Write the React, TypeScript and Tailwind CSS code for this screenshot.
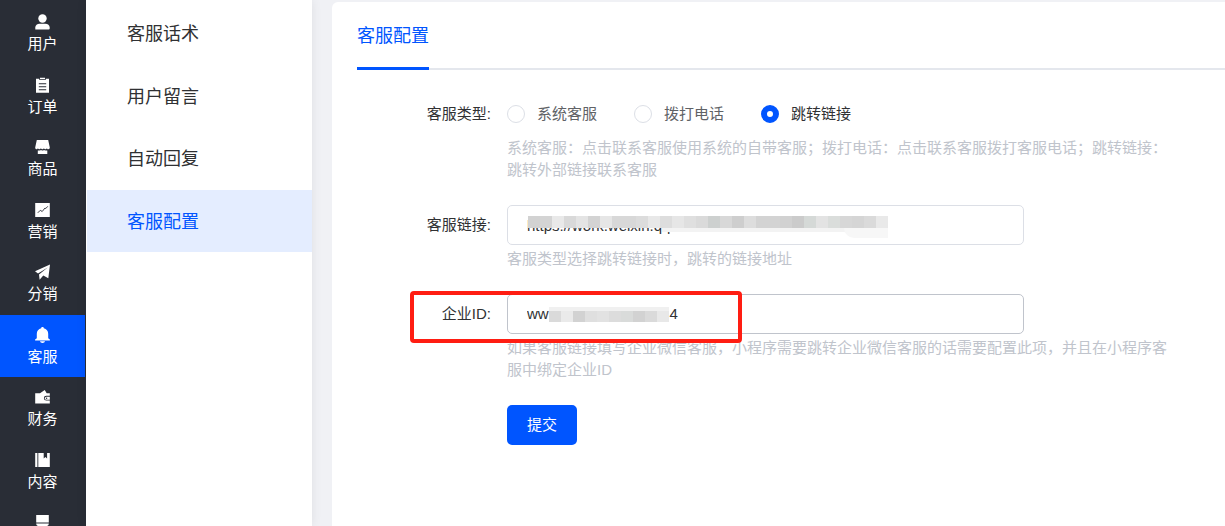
import { useState, type ReactNode } from 'react';
import clsx from 'clsx';

const icons: Record<string, ReactNode> = {
  user: (
    <>
      <circle cx="7.500" cy="4.500" r="4.200" />
      <path d="M.3 15.600v-2C.3 11 2.200 9.700 4.600 9.700h5.800c2.400 0 4.300 1.300 4.300 3.900v1a1 1 0 0 1-1 1z" />
    </>
  ),
  order: (
    <path
      fillRule="evenodd"
      d="M1 1.800h3.300V3h6.400V1.800H14V15.800H1zM5 .8h5v1.400H5zM3.800 6.200v1h7.400v-1zM3.800 9.200v1h7.400v-1zM3.800 12.200v1h7.400v-1z"
    />
  ),
  goods: (
    <path d="M1.800 1h11.400l1.600 7.500c0 1-.6 1.700-1.500 1.700s-1.200-.5-1.400-1c-.3.600-.8 1-1.500 1s-1.200-.4-1.500-1c-.3.600-.8 1-1.500 1s-1.200-.4-1.500-1c-.3.600-.8 1-1.500 1s-1.200-.4-1.500-1c-.2.500-.6 1-1.400 1S.2 9.500.2 8.500zM2.800 11.400h1.900c.6 0 1.100-.2 1.500-.5.800.7 1.900.7 2.700 0 .4.300.9.500 1.500.500h1.900V15H2.800z" />
  ),
  marketing: (
    <>
      <path d="M.2 1h14.600v14H.2z" />
      <path d="M2.800 10.800 5.300 8.300l1.900 1.200L10 6l.8.500 2-2.200" fill="none" stroke="#292d36" strokeWidth=".9" />
    </>
  ),
  share: <path d="M15 .5 13.300 14.300 8.300 11.500 4.600 15.700 4 10.600 12.700 3.500 3 9.500 0 7.300z" />,
  bell: (
    <path d="M7.500 0c.8 0 1.300.5 1.300 1.300 2.700.6 4.400 2.700 4.400 5.400v4.500l1.700 1.400v.9H.1v-.9l1.700-1.400V6.700c0-2.700 1.700-4.800 4.400-5.400C6.200.5 6.700 0 7.500 0zM5 14.300h5C9.700 15.400 8.800 16 7.500 16s-2.200-.6-2.500-1.700z" />
  ),
  wallet: (
    <>
      <path d="M5 4.200 9.700 1l2 3.200H14.800v2.600h-3.500a2.400 2.400 0 0 0 0 4.800h3.500v2.900H.2V4.200z" />
      <path d="M14.800 7.700v3h-3.400a1.500 1.500 0 0 1 0-3z" />
      <circle cx="11.600" cy="9.200" r=".7" fill="#292d36" />
    </>
  ),
  content: <path d="M.2 1h2.200v14H.2zM3.300 1h5.400v5.400l1.700-1.500 1.700 1.500V1h2.700v14H3.300z" />,
  device: <path d="M1.200 1h12.600v7.600H1.200zM1.200 9.600h12.600c0 1.500-.8 2.400-2 2.400H9.500l1 3h-6l1-3H3.200c-1.200 0-2-.9-2-2.400z" />,
};

const modules = [
  { icon: 'user', name: '用户' },
  { icon: 'order', name: '订单' },
  { icon: 'goods', name: '商品' },
  { icon: 'marketing', name: '营销' },
  { icon: 'share', name: '分销' },
  { icon: 'bell', name: '客服' },
  { icon: 'wallet', name: '财务' },
  { icon: 'content', name: '内容' },
  { icon: 'device', name: '' },
];

const subMenu = ['客服话术', '用户留言', '自动回复', '客服配置'];
const serviceTypes = ['系统客服', '拨打电话', '跳转链接'];

// blocks that hide private values
const linkMask = [
  'bg-[#d2d2d2]', 'bg-[#d4d4d4]', 'bg-[#e9e9e9]', 'bg-[#d9d9d9]', 'bg-[#e4e4e4]', 'bg-[#d3d3d3]',
  'bg-[#e6e6e6]', 'bg-[#d8d8d8]', 'bg-[#d8d8d8]', 'bg-[#dcdcdc]', 'bg-[#e8e8e8]', 'bg-[#dddddd]',
  'bg-[#e6e6e6]', 'bg-[#dfdfdf]', 'bg-[#dadada]', 'bg-[#cdd0cf]', 'bg-[#d8d8d8]', 'bg-[#cecece]',
  'bg-[#dddddd]', 'bg-[#d3d3d3]', 'bg-[#d3d3d3]', 'bg-[#d1d1d1]', 'bg-[#cbcbcb]', 'bg-[#d5d9d7]',
  'bg-[#e3e3e3]', 'bg-[#dadddb]', 'bg-[#d7d7d7]', 'bg-[#d5d5d5]', 'bg-[#dadada]', 'bg-[#e9e9e9]',
];
const idMask = [
  'bg-[#dadada]', 'bg-[#eaeaea]', 'bg-[#d2d2d2]', 'bg-[#dfdfdf]', 'bg-[#e2e2e2]',
  'bg-[#dcdcdc]', 'bg-[#d9dbda]', 'bg-[#d2d2d2]', 'bg-[#dadada]', 'bg-[#e8e8e8]',
];

function Field({ label, htmlFor, hint, children }: { label: string; htmlFor?: string; hint: string; children: ReactNode }) {
  return (
    <div className="relative flex gap-4">
      <label htmlFor={htmlFor} className="w-[134px] shrink-0 text-right leading-10 text-[#303133]">
        {label}
      </label>
      <div className="min-w-0 max-w-[670px] flex-1">
        {children}
        <p className="mt-[3px] leading-[22px] text-[#c0c4cc]">{hint}</p>
      </div>
    </div>
  );
}

export default function App() {
  const [type, setType] = useState('跳转链接');
  const [link, setLink] = useState('https://work.weixin.qq');
  const [corpId, setCorpId] = useState('ww' + ' '.repeat(29) + '4');

  return (
    <div className="flex h-screen overflow-hidden bg-[#f0f1f5] font-['Liberation_Sans','Noto_Sans_CJK_SC',sans-serif] text-[15px]">
      <nav className="w-[86px] shrink-0 overflow-hidden bg-[#292d36] pt-0.5 pr-px">
        <ul className="grid h-[563px] grid-rows-9">
          {modules.map((m) => (
            <li key={m.icon} className="min-h-0">
              <a
                href="#"
                aria-label={m.name || undefined}
                className={clsx(
                  'flex h-full flex-col items-center gap-[3px] pt-3 leading-[22px] text-white',
                  m.icon === 'bell' && 'bg-[#0055ff]'
                )}
              >
                <svg viewBox="0 0 16 16" fill="currentColor" className="h-4 w-4 shrink-0">
                  {icons[m.icon]}
                </svg>
                {m.name}
              </a>
            </li>
          ))}
        </ul>
      </nav>

      <aside className="w-[226px] shrink-0 bg-white pt-0.5 pl-px shadow-[0_0_10px_rgba(0,0,0,0.08)]">
        <ul className="grid h-[250px] grid-rows-4 text-[18px]">
          {subMenu.map((name) => (
            <li key={name} className="min-h-0">
              <a
                href="#"
                className={clsx(
                  'flex h-full items-center pt-[3px] pl-10',
                  name === '客服配置' ? 'bg-[#e4edff] text-[#0055ff]' : 'text-[#303133]'
                )}
              >
                {name}
              </a>
            </li>
          ))}
        </ul>
      </aside>

      <main className="mt-0.5 ml-5 min-w-0 flex-1 rounded-tl-md bg-white pl-[25px]">
        <div role="tablist" className="flex border-b-2 border-[#e4e7ed]">
          <button
            type="button"
            role="tab"
            aria-selected="true"
            className="-mb-0.5 h-[68px] border-b-3 border-[#0055ff] pt-[3px] text-[18px] text-[#0055ff]"
          >
            客服配置
          </button>
        </div>

        <form className="flex flex-col gap-6 pt-6" onSubmit={(e) => e.preventDefault()}>
          <Field
            label="客服类型:"
            hint="系统客服：点击联系客服使用系统的自带客服；拨打电话：点击联系客服拨打客服电话；跳转链接：跳转外部链接联系客服"
          >
            <div role="radiogroup" aria-label="客服类型" className="flex h-10 items-center gap-[37px]">
              {serviceTypes.map((name) => (
                <label key={name} className={clsx('flex items-center gap-3', type === name ? 'text-[#303133]' : 'text-[#606266]')}>
                  <input
                    type="radio"
                    name="type"
                    checked={type === name}
                    onChange={() => setType(name)}
                    className="h-[18px] w-[18px] appearance-none rounded-full border border-[#dcdfe6] bg-white checked:border-[6px] checked:border-[#0055ff]"
                  />
                  {name}
                </label>
              ))}
            </div>
          </Field>

          <Field label="客服链接:" htmlFor="link" hint="客服类型选择跳转链接时，跳转的链接地址">
            <div className="relative max-w-[517px]">
              <input
                id="link"
                value={link}
                onChange={(e) => setLink(e.target.value)}
                className="block h-10 w-full rounded-[5px] border border-[#dcdfe6] bg-white px-[19px] text-[#303133] outline-none"
              />
              <div className="absolute top-[11px] left-[21px] flex h-3">
                {linkMask.map((color, i) => (
                  <span key={i} className={clsx('w-3', color)} />
                ))}
              </div>
              <div className="absolute top-[23px] left-[155px] h-1 w-[226px] bg-[#f3f3f3]" />
              <div className="absolute top-[23px] left-[337px] h-2.5 w-11 rounded-bl-xl bg-[#f7f7f7]" />
            </div>
          </Field>

          <div className="relative">
            <Field
              label="企业ID:"
              htmlFor="corp-id"
              hint="如果客服链接填写企业微信客服，小程序需要跳转企业微信客服的话需要配置此项，并且在小程序客服中绑定企业ID"
            >
              <div className="relative max-w-[517px]">
                <input
                  id="corp-id"
                  value={corpId}
                  onChange={(e) => setCorpId(e.target.value)}
                  className="block h-10 w-full rounded-[5px] border border-[#c0c4cc] bg-white px-[19px] pb-0.5 text-[#303133] outline-none"
                />
                <div className="absolute top-[13px] left-[42px] h-[5px] w-[120px] bg-[#f0f0f0]" />
                <div className="absolute top-[17px] left-[42px] flex h-[11px] w-[120px]">
                  {idMask.map((color, i) => (
                    <span key={i} className={clsx('flex-1', color)} />
                  ))}
                </div>
              </div>
            </Field>
            <div className="pointer-events-none absolute -top-[3px] left-[53px] h-[52px] w-[332px] rounded border-4 border-[#ff1d12]" />
          </div>

          <button type="submit" className="ml-[150px] h-10 w-[70px] rounded-[5px] bg-[#0055ff] text-white">
            提交
          </button>
        </form>
      </main>
    </div>
  );
}
